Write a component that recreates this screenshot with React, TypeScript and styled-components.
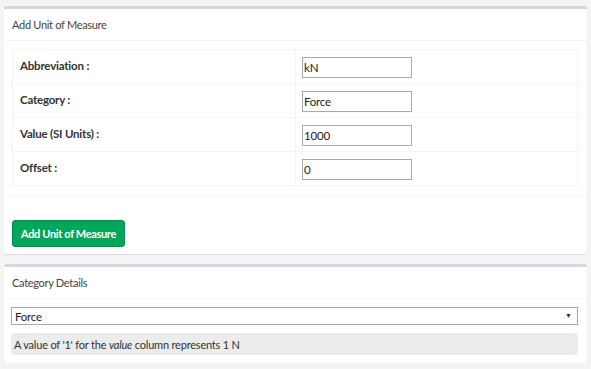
import * as React from "react";
import styled, { createGlobalStyle } from "styled-components";

const GlobalStyle = createGlobalStyle`
  html, body {
    margin: 0;
    padding: 0;
    background: #f4f4f4;
  }
  body {
    font-family: Lato, "Open Sans", sans-serif;
    color: #333;
  }
`;

const Page = styled.div`
  padding: 6px 4px 0 4px;
  display: flex;
  flex-direction: column;
  gap: 10px;
`;

const Box = styled.div`
  background: #fff;
  border-top: 3px solid #d2d6de;
  border-radius: 3px;
  box-shadow: 0 1px 1px rgba(0, 0, 0, 0.1);
`;

const BoxHeader = styled.div`
  height: 31px;
  display: flex;
  align-items: center;
  padding: 0 8px;
  border-bottom: 1px solid #f4f4f4;
  font-size: 11px;
  letter-spacing: -0.3px;
  color: #444;
`;

const BoxBody = styled.div<{ $pad?: string }>`
  padding: ${(p) => p.$pad || "8px 9px 9px 8px"};
`;

const Table = styled.table`
  width: 100%;
  border-collapse: collapse;
  border: 1px solid #f4f4f4;
`;

const Row = styled.tr`
  height: 34px;
  border-top: 1px solid #f4f4f4;
`;

const LabelCell = styled.td`
  width: 268px;
  padding: 0 7px 2px 7px;
  font-size: 11.5px;
  letter-spacing: -0.2px;
  font-weight: bold;
  color: #333;
  border-right: 1px solid #f4f4f4;
`;

const InputCell = styled.td`
  padding: 0 6px;
`;

const TextInput = styled.input`
  box-sizing: border-box;
  width: 110px;
  height: 21px;
  padding: 0 1px;
  border: 1px solid #a9a9a9;
  border-radius: 0;
  font-family: Lato, sans-serif;
  font-size: 11.5px;
  letter-spacing: -0.2px;
  color: #222;
  outline: none;
`;

const BoxFooter = styled.div`
  border-top: 1px solid #f4f4f4;
  padding: 24px 8px 7px 8px;
`;

const Button = styled.button`
  height: 27px;
  width: 113px;
  background: #00a65a;
  border: 1px solid #008d4c;
  border-radius: 3px;
  color: #fff;
  font-family: Lato, sans-serif;
  font-weight: bold;
  font-size: 11px;
  letter-spacing: -0.35px;
  padding: 0;
`;

const SelectWrap = styled.div`
  position: relative;
`;

const Select = styled.select`
  box-sizing: border-box;
  display: block;
  width: 100%;
  height: 18px;
  border: 1px solid #a9a9a9;
  border-radius: 0;
  background: #fff;
  appearance: none;
  padding: 0 3px;
  font-family: Lato, sans-serif;
  font-size: 11.5px;
  letter-spacing: -0.2px;
  color: #222;
  outline: none;
`;

const Caret = styled.span`
  position: absolute;
  right: 6px;
  top: 4px;
  font-size: 7px;
  color: #333;
  pointer-events: none;
`;

const Callout = styled.div`
  margin-top: 8px;
  background: #ececec;
  border-radius: 4px;
  height: 22px;
  display: flex;
  align-items: center;
  padding: 0 3px;
  font-size: 11px;
  letter-spacing: -0.2px;
  color: #333;
`;

const fields = [
  { label: "Abbreviation :", value: "kN" },
  { label: "Category :", value: "Force" },
  { label: "Value (SI Units) :", value: "1000" },
  { label: "Offset :", value: "0" },
];

export default function App() {
  return (
    <>
      <GlobalStyle />
      <Page>
        <Box>
          <BoxHeader>Add Unit of Measure</BoxHeader>
          <BoxBody>
            <Table>
              <tbody>
                {fields.map((f) => (
                  <Row key={f.label}>
                    <LabelCell>{f.label}</LabelCell>
                    <InputCell>
                      <TextInput defaultValue={f.value} />
                    </InputCell>
                  </Row>
                ))}
              </tbody>
            </Table>
          </BoxBody>
          <BoxFooter>
            <Button>Add Unit of Measure</Button>
          </BoxFooter>
        </Box>
        <Box>
          <BoxHeader>Category Details</BoxHeader>
          <BoxBody $pad="8px 9px 8px 7px">
            <SelectWrap>
              <Select defaultValue="Force">
                <option>Force</option>
              </Select>
              <Caret>▼</Caret>
            </SelectWrap>
            <Callout>
              A value of '1' for the&nbsp;<i>value</i>&nbsp;column represents 1 N
            </Callout>
          </BoxBody>
        </Box>
      </Page>
    </>
  );
}
